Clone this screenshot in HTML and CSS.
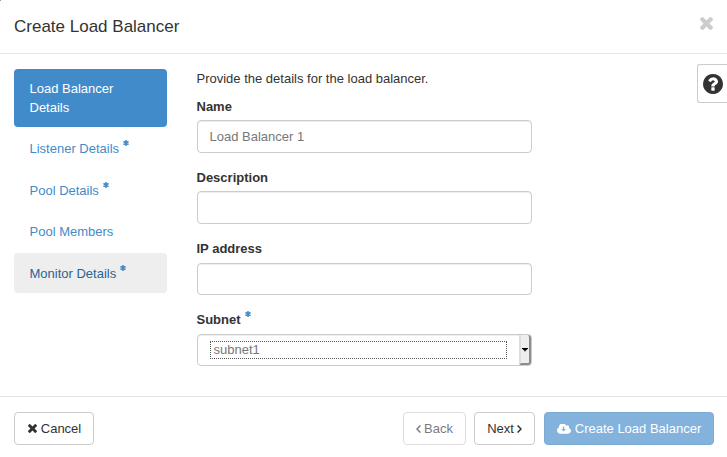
FILE: index.html
```html
<!DOCTYPE html>
<html lang="en">
<head>
<meta charset="utf-8">
<title>Create Load Balancer</title>
<link rel="stylesheet" href="styles.css">
</head>
<body>
<svg class="defs" width="0" height="0">
  <symbol id="times" viewBox="302 238 1188 1188"><path d="M1490 1194q0 40-28 68l-136 136q-28 28-68 28t-68-28l-294-294-294 294q-28 28-68 28t-68-28l-136-136q-28-28-28-68t28-68l294-294-294-294q-28-28-28-68t28-68l136-136q28-28 68-28t68 28l294 294 294-294q28-28 68-28t68 28l136 136q28 28 28 68t-28 68l-294 294 294 294q28 28 28 68z"/></symbol>
  <symbol id="star" viewBox="0 0 12 12"><path d="M6 1.500v9M2 3.700l8 4.600M2 8.300l8-4.600" stroke="currentColor" stroke-width="3.400" stroke-linecap="round"/></symbol>
  <symbol id="help" viewBox="128 128 1536 1536"><path d="M1024 1376v-192q0-14-9-23t-23-9h-192q-14 0-23 9t-9 23v192q0 14 9 23t23 9h192q14 0 23-9t9-23zm256-672q0-88-55.500-163t-138.500-116-170-41q-243 0-371 213-15 24 8 42l132 100q7 6 19 6 16 0 25-12 53-68 86-92 34-24 86-24 48 0 85.500 26t37.500 59q0 38-20 61t-68 45q-63 28-115.500 86.500t-52.500 125.500v36q0 14 9 23t23 9h192q14 0 23-9t9-23q0-19 21.500-49.500t54.500-49.500q32-18 49-28.500t46-35 44.500-48 28-60.500 12.500-81zm384 192q0 209-103 385.500t-279.500 279.500-385.500 103-385.500-103-279.500-279.500-103-385.500 103-385.500 279.500-279.500 385.500-103 385.500 103 279.500 279.500 103 385.500z"/></symbol>
  <symbol id="cloud" viewBox="64 256 1920 1280"><path fill-rule="evenodd" d="M1984 1152q0 159-112.500 271.500t-271.500 112.500h-1088q-185 0-316.500-131.500t-131.500-316.500q0-132 71-241.500t187-163.500q-2-28-2-43 0-212 150-362t362-150q158 0 286.500 88t187.500 230q70-62 166-62 106 0 181 75t75 181q0 75-41 138 129 30 213 134.500t84 239.500zM1280 896h-224v-352h-192v352h-224l320 352z"/></symbol>
</svg>
<div class="modal">
  <header class="header">
    <h1 class="title">Create Load Balancer</h1>
    <button class="close" aria-label="Close"><svg><use href="#times"/></svg></button>
  </header>
  <main class="body">
    <nav class="nav">
      <a class="nav-item active">Load Balancer Details</a>
      <a class="nav-item">Listener Details<svg class="star"><use href="#star"/></svg></a>
      <a class="nav-item required">Pool Details<svg class="star"><use href="#star"/></svg></a>
      <a class="nav-item">Pool Members</a>
      <a class="nav-item required hover">Monitor Details<svg class="star"><use href="#star"/></svg></a>
    </nav>
    <form class="form">
      <p class="intro">Provide the details for the load balancer.</p>
      <div class="group"><label class="label">Name</label><div class="control">Load Balancer 1</div></div>
      <div class="group"><label class="label">Description</label><div class="control"></div></div>
      <div class="group"><label class="label">IP address</label><div class="control"></div></div>
      <div class="group"><label class="label">Subnet<svg class="star"><use href="#star"/></svg></label>
        <div class="control select"><span class="focus">subnet1</span><span class="drop"><svg viewBox="0 0 7 4"><path d="M0 0h7v1H6v1H5v1H4v1H3V3H2V2H1V1H0z"/></svg></span></div>
      </div>
    </form>
    <button class="help" aria-label="Help"><svg><use href="#help"/></svg></button>
  </main>
  <footer class="footer">
    <button class="btn cancel"><svg class="x"><use href="#times"/></svg>Cancel</button>
    <button class="btn back"><svg class="angle" viewBox="0 0 5 8"><path d="M4.400.4L1 4l3.400 3.600"/></svg>Back</button>
    <button class="btn next">Next<svg class="angle" viewBox="0 0 5 8"><path d="M.6.4L4 4 .6 7.600"/></svg></button>
    <button class="btn primary"><svg class="cloud"><use href="#cloud"/></svg>Create Load Balancer</button>
  </footer>
</div>
</body>
</html>
```
FILE: styles.css
```css
* { box-sizing: border-box; }
body { margin: 0; background: #fff; color: #333; font: 13px/18.570px "Liberation Sans", Arial, sans-serif; }
button { font: inherit; color: inherit; background: #fff; margin: 0; }
svg { fill: currentColor; flex: none; }
.defs { position: absolute; }
.modal { width: 727px; height: 457px; overflow: hidden; display: flex; flex-direction: column; background: linear-gradient(#999, #999) 0 0 / 1px 1px no-repeat; }
.header { height: 54px; flex: none; display: flex; justify-content: space-between; align-items: flex-start; padding: 15px 14px 0; border-bottom: 1px solid #e5e5e5; }
.title { margin: 0; font-size: 17px; line-height: 24px; font-weight: 400; }
.close { border: 0; padding: 0; width: 13px; height: 14px; margin-top: 1px; color: #ccc; background: none; }
.close svg { display: block; width: 13px; height: 13px; }
.body { height: 342px; flex: none; display: flex; align-items: flex-start; padding: 15px 0 0 14px; }
.nav { width: 153px; display: flex; flex-direction: column; gap: 1.500px; }
.nav-item { height: 40px; padding: 11px 15.500px 0; color: #428bca; border-radius: 4px; }
.nav-item.active { height: 58px; color: #fff; background: #428bca; }
.nav-item.required { padding-top: 12px; }
.nav-item.hover { background: #eee; color: #2a6496; }
.star { width: 6px; height: 6px; margin-left: 4px; vertical-align: 7px; color: #428bca; }
.form { width: 335px; margin-left: 29.500px; padding-top: 1px; }
.intro { margin: 0 0 9.200px; }
.group + .group { margin-top: 16px; }
.label { display: block; height: 18.570px; margin-bottom: 4px; font-weight: 700; }
.control { height: 32.570px; padding: 7px 12px 0; border: 1px solid #ccc; border-radius: 4px; color: #777; box-shadow: inset 0 1px 1px rgba(0,0,0,.075); }
.select { display: flex; align-items: center; padding: 0 0 0 12px; }
.focus { width: 297px; height: 18px; padding-left: 3px; line-height: 16px; border: 1px dotted #555; }
.drop { width: 12px; height: 30px; margin-left: auto; display: flex; align-items: center; justify-content: center; background: #eee; border: solid; border-width: 0 2px 2px 2px; border-color: #ddd #8c8c8c #8c8c8c #ddd; border-radius: 0 3px 3px 0; color: #000; }
.drop svg { width: 6px; height: 3.500px; margin-top: 2px; }
.help { width: 30px; height: 39px; margin: -5px 0 0 165.500px; padding: 0 0 0 5px; border: 1px solid #ccc; border-right: 0; border-radius: 3px 0 0 3px; }
.help svg { display: block; width: 20px; height: 20px; }
.footer { flex: 1; display: flex; align-items: flex-start; padding: 15px 13px 0 14px; border-top: 1px solid #e5e5e5; }
.btn { height: 33px; padding: 1px 0 0; display: flex; align-items: center; justify-content: center; border: 1px solid #ccc; border-radius: 4px; white-space: nowrap; }
.cancel { width: 80px; margin-right: auto; padding-left: 1px; }
.back { width: 63px; opacity: .65; margin-right: 8px; }
.next { width: 61px; margin-right: 9px; }
.primary { width: 170px; color: #fff; background: #428bca; border-color: #357ebd; opacity: .65; }
.x { width: 9px; height: 9px; margin: 0 4px 1px 0; }
.angle { width: 5px; height: 8px; margin-bottom: 1px; fill: none; stroke: currentColor; stroke-width: 1.400; }
.back .angle { margin-right: 3px; }
.next .angle { margin-left: 3px; }
.cloud { width: 14px; height: 10px; margin: 0 4px 1px 0; }
```
